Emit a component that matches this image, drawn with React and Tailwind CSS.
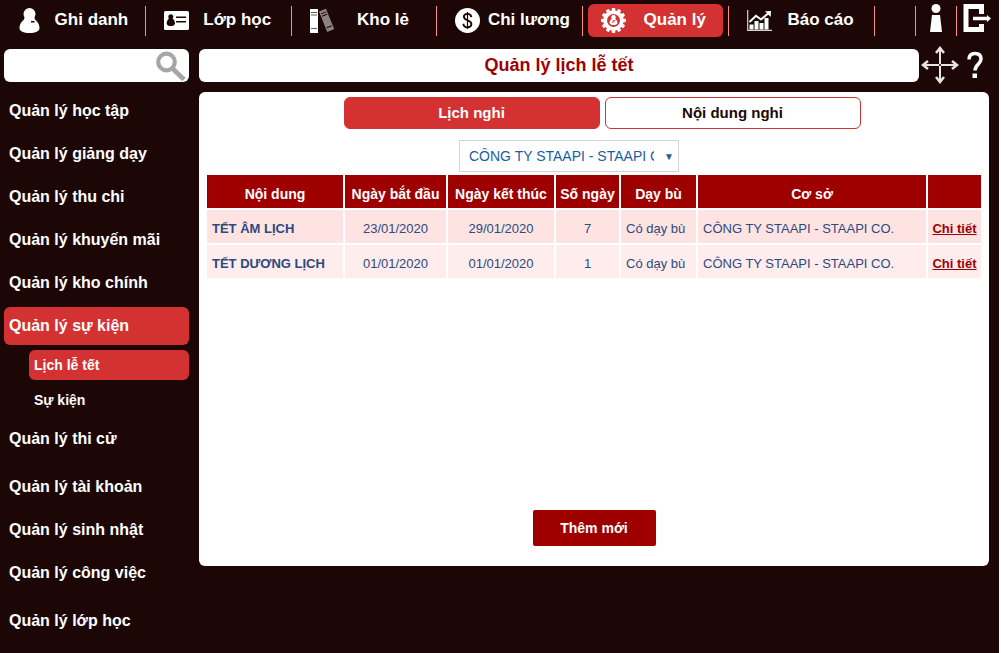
import React, { useState } from "react";
import clsx from "clsx";

function UserIcon() {
  return (
    <svg viewBox="0 0 25 25" className="size-[25px]" fill="#fff">
      <ellipse cx="11.5" cy="6" rx="6" ry="6" />
      <path d="M6.5 8.5C6.8 11 5.500 12 4 13.500c-1.600 1.700-2.500 4-2.500 6.500 0 3.200 4 5 10 5s10-1.800 10-5c0-2.500-.9-4.800-2.500-6.500-1.500-1.500-2.800-2.500-2.500-5z" />
      <path d="M13 13h3.500v1.500H13z" fill="#1c0706" />
    </svg>
  );
}

function CardIcon() {
  return (
    <svg viewBox="0 0 25 25" className="size-[25px]">
      <rect y="3" width="25" height="19" rx="1.500" fill="#fff" />
      <g fill="#1c0706">
        <circle cx="6.800" cy="8.800" r="2.500" />
        <path d="M5 10.500c-1.300 1.200-2.300 2.600-2.300 4.700 0 2 1.800 2.800 4.100 2.800s4.100-.8 4.100-2.800c0-2.100-1-3.500-2.300-4.700z" />
        <rect x="12" y="8.500" width="10" height="1.500" />
        <rect x="12" y="13" width="10" height="1.500" />
      </g>
    </svg>
  );
}

function BinderIcon() {
  return (
    <svg viewBox="0 0 25 25" className="size-[25px]">
      <rect y="1" width="8" height="24" fill="#fff" />
      <path
        d="M1 4.500h6M1 7h6M1 20.500h6"
        stroke="#6b5c5c"
        strokeWidth="1"
        fill="none"
      />
      <g transform="rotate(-22 9 3.500)">
        <rect x="9" y="3.500" width="7.500" height="22" fill="#8d8282" />
        <path d="M10 6.500h5.500M10 9h5.500M10 21.500h5.500" stroke="#1c0706" />
      </g>
    </svg>
  );
}

function DollarIcon() {
  return (
    <svg viewBox="0 0 25 25" className="size-[25px]" fill="none">
      <circle cx="12.500" cy="12.500" r="12.500" fill="#fff" />
      <path
        d="M16.300 9.200c-.3-2.300-1.800-3.300-3.800-3.300-2.200 0-3.600 1.100-3.600 2.900 0 4.200 7.500 3 7.500 7.200 0 2-1.700 3.200-3.900 3.200-2.300 0-4-1.200-4.100-3.500"
        stroke="#1c0706"
        strokeWidth="1.900"
      />
      <path d="M12.500 4v17" stroke="#1c0706" strokeWidth="1.200" />
    </svg>
  );
}

function GearIcon() {
  const teeth = [0, 30, 60, 90, 120, 150];
  return (
    <svg viewBox="0 0 25 25" className="size-[25px]">
      <circle cx="12.500" cy="12.500" r="10.200" fill="#fff" />
      {teeth.map((deg) => (
        <rect
          key={deg}
          x="10.700"
          y="0"
          width="3.600"
          height="25"
          rx="1"
          fill="#fff"
          transform={`rotate(${deg} 12.5 12.5)`}
        />
      ))}
      <circle cx="12.500" cy="12.500" r="6.500" fill="#d43132" />
      <circle cx="12.500" cy="9.300" r="2.300" fill="#fff" />
      <path
        d="M11.300 10.500c-1.900 1.200-2.900 2.900-2.700 4.500.2 1.500 1.900 2 3.900 2s3.700-.5 3.900-2c.2-1.600-.8-3.300-2.700-4.500z"
        fill="#fff"
      />
      <path d="M12 12.800h2.300M12 13v2" stroke="#d43132" strokeWidth="1" />
    </svg>
  );
}

function ChartIcon() {
  return (
    <svg viewBox="0 0 25 25" className="size-[25px]" fill="none">
      <path d="M.7 2v20.400H25" stroke="#d8d2d2" strokeWidth="1.200" />
      <g fill="#fff">
        <rect x="2.500" y="16.500" width="4" height="5" />
        <rect x="7.500" y="13" width="4" height="8.500" />
        <rect x="12.500" y="15" width="4" height="6.500" />
        <rect x="17.500" y="10" width="4" height="11.500" />
        <path d="M18 3.200l6-.2-.3 6-2-2z" />
      </g>
      <path d="M2.500 14L9 7.800l5 3.700L22 4.800" stroke="#fff" strokeWidth="2" />
    </svg>
  );
}

function InfoIcon() {
  return (
    <svg viewBox="0 0 12 28" className="h-7 w-3" fill="#fff">
      <circle cx="6" cy="4.500" r="4.500" />
      <path d="M2 11h8l2 17H0z" />
    </svg>
  );
}

function ExitIcon() {
  return (
    <svg viewBox="0 0 28 28" className="size-7" fill="none">
      <path d="M18.500 10V2.500H3v23h15.500V20" stroke="#fff" strokeWidth="5" />
      <path d="M10 14.500h14" stroke="#fff" strokeWidth="3.500" />
      <path d="M24 11l4 3.500-4 3.500z" fill="#fff" />
    </svg>
  );
}

function MoveIcon() {
  return (
    <svg viewBox="0 0 38 38" className="size-[38px]" fill="none" stroke="#e9e4e2" strokeWidth="2">
      <path d="M19 2v34M2 19h34" />
      <path d="M15 7l4-5 4 5M15 31l4 5 4-5M7 15l-5 4 5 4M31 15l5 4-5 4" strokeWidth="2.500" />
      <circle cx="19" cy="19" r="1" fill="#1c0706" stroke="none" />
    </svg>
  );
}

function HelpIcon() {
  return (
    <svg viewBox="0 0 16 28" className="h-7 w-4" fill="none">
      <path
        d="M2 8.500C2 4.500 4.200 2.500 8 2.500s6 2 6 5.500c0 5-6 5.500-6 11.500"
        stroke="#fff"
        strokeWidth="3.500"
      />
      <rect x="5.500" y="22.500" width="4.500" height="4.500" fill="#fff" />
    </svg>
  );
}

function SearchIcon() {
  return (
    <svg viewBox="0 0 30 30" className="size-[30px]" fill="none" stroke="#a6a6a6">
      <circle cx="10.500" cy="11" r="8.300" strokeWidth="4.200" />
      <path d="M16.500 17.500L28 28.500" strokeWidth="4.800" />
    </svg>
  );
}

const navItems = [
  { label: "Ghi danh", icon: UserIcon },
  { label: "Lớp học", icon: CardIcon },
  { label: "Kho lẻ", icon: BinderIcon },
  { label: "Chi lương", icon: DollarIcon },
  { label: "Quản lý", icon: GearIcon, active: true },
  { label: "Báo cáo", icon: ChartIcon },
];

const menuGroups = [
  [
    { label: "Quản lý học tập" },
    { label: "Quản lý giảng dạy" },
    { label: "Quản lý thu chi" },
    { label: "Quản lý khuyến mãi" },
    { label: "Quản lý kho chính" },
    {
      label: "Quản lý sự kiện",
      active: true,
      children: [{ label: "Lịch lễ tết", active: true }, { label: "Sự kiện" }],
    },
    { label: "Quản lý thi cử" },
  ],
  [
    { label: "Quản lý tài khoản" },
    { label: "Quản lý sinh nhật" },
    { label: "Quản lý công việc" },
  ],
  [{ label: "Quản lý lớp học" }],
];

const holidays = [
  { name: "TẾT ÂM LỊCH", start: "23/01/2020", end: "29/01/2020", days: 7 },
  { name: "TẾT DƯƠNG LỊCH", start: "01/01/2020", end: "01/01/2020", days: 1 },
];

const company = "CÔNG TY STAAPI - STAAPI CO.";

function TopNav() {
  return (
    <header className="flex h-[41px] items-center">
      <nav className="grid flex-1 grid-cols-6">
        {navItems.map(({ label, icon: Icon, active }) => (
          <div key={label} className="flex h-[30px] items-center border-r border-[#ff8a8a] px-[5px]">
            <a
              href="#"
              className={clsx(
                "flex h-[33px] flex-1 items-center rounded-md pl-[13px]",
                active && "bg-[#d43132]"
              )}
            >
              <Icon />
              <span className="flex-1 pb-0.5 text-center text-[17px] font-bold whitespace-nowrap">
                {label}
              </span>
            </a>
          </div>
        ))}
      </nav>
      <div className="h-[30px] w-[41px] border-r border-[#ff8a8a]" />
      <div className="flex h-[30px] w-[41px] items-center justify-center border-r border-[#ff8a8a]">
        <button aria-label="Thông tin" className="pb-1.5">
          <InfoIcon />
        </button>
      </div>
      <div className="flex w-[42px] pl-[6px]">
        <button aria-label="Đăng xuất" className="pb-1.5">
          <ExitIcon />
        </button>
      </div>
    </header>
  );
}

function Sidebar() {
  return (
    <ul className="flex w-[185px] flex-col gap-[10px] font-bold">
      {menuGroups.map((group, i) => (
        <li key={i}>
          <ul className="flex flex-col gap-[5px]">
            {group.map((item) => (
              <li key={item.label}>
                <a
                  href="#"
                  className={clsx(
                    "flex h-[38px] items-center rounded-md px-[5px] text-base",
                    item.active && "bg-[#d43132]"
                  )}
                >
                  {item.label}
                </a>
                {item.children && (
                  <ul className="mt-[5px] flex flex-col gap-[5px] pl-[25px] text-sm">
                    {item.children.map((child) => (
                      <li key={child.label}>
                        <a
                          href="#"
                          className={clsx(
                            "flex h-[30px] items-center rounded-md px-[5px]",
                            child.active && "bg-[#d43132]"
                          )}
                        >
                          {child.label}
                        </a>
                      </li>
                    ))}
                  </ul>
                )}
              </li>
            ))}
          </ul>
        </li>
      ))}
    </ul>
  );
}

function HolidayTable() {
  return (
    <table className="w-full table-fixed border-separate border-spacing-[2px] text-[13px] text-[#2b4a80]">
      <colgroup>
        <col className="w-[136px]" />
        <col className="w-[101px]" />
        <col className="w-[106px]" />
        <col className="w-[63px]" />
        <col className="w-[75px]" />
        <col />
        <col className="w-[53px]" />
      </colgroup>
      <thead>
        <tr className="h-[33px] bg-[#9e0000] text-sm whitespace-nowrap text-white [&>*]:pt-1">
          <th>Nội dung</th>
          <th>Ngày bắt đầu</th>
          <th>Ngày kết thúc</th>
          <th>Số ngày</th>
          <th>Dạy bù</th>
          <th>Cơ sở</th>
          <td />
        </tr>
      </thead>
      <tbody>
        {holidays.map((row) => (
          <tr
            key={row.name}
            className="h-[33px] bg-[#ffecec] text-center odd:bg-[#ffe3e3] [&>td]:pt-[5px]"
          >
            <td className="pl-[5px] text-left font-bold">{row.name}</td>
            <td>{row.start}</td>
            <td>{row.end}</td>
            <td>{row.days}</td>
            <td className="pl-[5px] text-left">Có dạy bù</td>
            <td className="pl-[5px] text-left">{company}</td>
            <td>
              <a href="#" className="font-bold text-[#9e0000] underline">
                Chi tiết
              </a>
            </td>
          </tr>
        ))}
      </tbody>
    </table>
  );
}

export default function App() {
  const [tab, setTab] = useState("Lịch nghỉ");
  const [search, setSearch] = useState("");

  return (
    <div className="min-h-screen bg-white pr-[2px] font-['Liberation_Sans',Arial,sans-serif]">
      <div className="min-h-screen bg-[#1c0706] text-white">
        <TopNav />

        <div className="flex h-[51px] items-start gap-[10px] pt-2 pl-1">
          <label className="flex h-[33px] w-[185px] items-center rounded-md bg-white pr-[3px] pl-2">
            <input
              type="text"
              aria-label="Tìm kiếm"
              value={search}
              onChange={(e) => setSearch(e.target.value)}
              className="min-w-0 flex-1 text-sm text-black outline-none"
            />
            <SearchIcon />
          </label>
          <h1 className="flex h-[33px] flex-1 items-center justify-center rounded-md bg-white pb-0.5 text-lg font-bold text-[#9e0000]">
            Quản lý lịch lễ tết
          </h1>
          <div className="-ml-2 flex h-[31px] w-[78px] items-center gap-2">
            <button aria-label="Di chuyển">
              <MoveIcon />
            </button>
            <button aria-label="Trợ giúp">
              <HelpIcon />
            </button>
          </div>
        </div>

        <div className="flex items-start gap-[10px] pr-[10px] pb-3 pl-1">
          <Sidebar />

          <main className="flex min-h-[474px] flex-1 flex-col rounded-md bg-white px-[6px] pt-[5px] pb-5">
            <div className="flex justify-center gap-[5px] pl-4">
              {["Lịch nghỉ", "Nội dung nghỉ"].map((name) => (
                <button
                  key={name}
                  onClick={() => setTab(name)}
                  className={clsx(
                    "h-8 w-64 rounded-md border border-[#d43132] text-[15px] font-bold",
                    tab === name ? "bg-[#d43132] text-white" : "bg-white text-[#1c0706]"
                  )}
                >
                  {name}
                </button>
              ))}
            </div>

            <div className="mt-[11px] flex justify-center pr-[50px]">
              <div className="relative w-[220px]">
                <select
                  aria-label="Cơ sở"
                  className="h-8 w-full appearance-none border border-[#d4d4d4] bg-white pr-6 pl-[9px] text-sm text-[#1a5da0]"
                >
                  <option>{company}</option>
                </select>
                <span className="pointer-events-none absolute inset-y-0 right-[5px] flex items-center text-[10px] text-[#1a5da0]">
                  ▼
                </span>
              </div>
            </div>

            <div className="mt-px">
              <HolidayTable />
            </div>

            <button className="mt-auto h-9 w-[123px] self-center rounded-xs bg-[#9e0000] text-sm font-bold text-white">
              Thêm mới
            </button>
          </main>
        </div>
      </div>
    </div>
  );
}
